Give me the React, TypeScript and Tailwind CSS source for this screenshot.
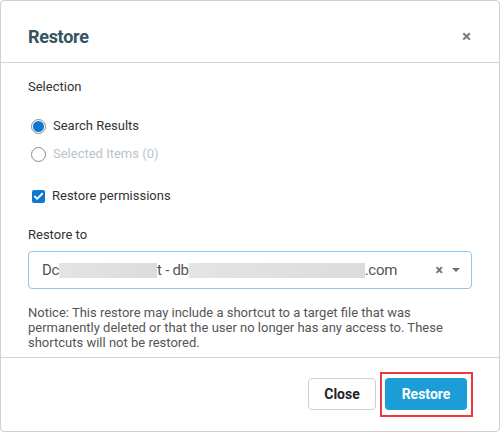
import { Check } from 'lucide-react';

function Radio({ checked, label, disabled }: { checked?: boolean; label: string; disabled?: boolean }) {
  return (
    <label className="flex items-center gap-[7px] h-5">
      <span className="w-[15px] h-[15px] rounded-full border border-[#8a8a8a] bg-white flex items-center justify-center ml-[3px]">
        {checked && <span className="w-[11px] h-[11px] rounded-full bg-[#0b78d4]" />}
      </span>
      <span className={disabled ? 'text-[#b9c3cb]' : 'text-[#333]'}>{label}</span>
    </label>
  );
}

export default function App() {
  return (
    <div className="w-[500px] h-[432px] bg-white font-['Roboto',sans-serif] text-[13px]">
      <div className="h-full flex flex-col border border-[#d6cfcf] rounded-[4px]">
        <header className="h-[62px] border-b border-[#d8d3d3] pl-[27px] pr-[28px] pt-[10px] flex items-center justify-between">
          <h2 className="text-[18px] font-bold text-[#35535f] tracking-[-0.3px]">Restore</h2>
          <span className="text-[17px] font-bold text-[#7a7a7a] leading-none">×</span>
        </header>

        <div className="pl-[27px] pr-[27px] pt-[16px] flex flex-col">
          <p className="leading-4 text-[#333]">Selection</p>
          <div className="mt-[21px] flex flex-col gap-2">
            <Radio checked label="Search Results" />
            <Radio label="Selected Items (0)" disabled />
          </div>
          <label className="mt-[22px] flex items-center gap-[7px] h-5">
            <span className="ml-[4px] w-[13px] h-[13px] rounded-[2px] bg-[#0b78d4] flex items-center justify-center">
              <Check size={11} strokeWidth={4} className="text-white" />
            </span>
            <span className="text-[#333]">Restore permissions</span>
          </label>
          <p className="mt-[21px] leading-4 text-[#333]">Restore to</p>
          <div className="mt-[8px] h-[38px] border border-[#90c6f4] rounded-[4px] flex items-center pl-[13px] pr-[11px]">
            <div className="flex-1 flex items-center text-[15px] text-[#555] whitespace-nowrap tracking-[-0.3px]">
              <span>Dc</span>
              <span className="inline-block w-[98px] h-[15px] bg-gradient-to-r from-[#e4e4e4] to-[#dcdcdc]" />
              <span>t - db</span>
              <span className="inline-block w-[176px] h-[15px] bg-gradient-to-r from-[#e4e4e4] to-[#dcdcdc]" />
              <span>.com</span>
            </div>
            <span className="text-[14px] font-bold text-[#707070] leading-none">×</span>
            <span className="ml-[9px] w-0 h-0 border-l-[4px] border-r-[4px] border-t-[4px] border-l-transparent border-r-transparent border-t-[#707070]" />
          </div>
          <p className="mt-[16px] leading-[15px] text-[#555]">
            Notice: This restore may include a shortcut to a target file that was permanently deleted or that the user no longer has any access to. These shortcuts will not be restored.
          </p>
        </div>

        <footer className="mt-[7px] border-t border-[#d8d3d3] flex-1 flex justify-end items-start pt-[20px] pr-[32px] gap-[9px]">
          <button className="w-[68px] h-[32px] rounded-[4px] border border-[#cfcfcf] bg-white text-[14px] font-bold text-[#1e2328]">
            Close
          </button>
          <button className="relative w-[82px] h-[32px] rounded-[4px] bg-[#1b9ed8] text-[14px] font-bold text-white">
            Restore
            <span className="absolute left-[-5px] right-[-6px] top-[-6px] bottom-[-7px] border-2 border-[#ea3a40]" />
          </button>
        </footer>
      </div>
    </div>
  );
}
